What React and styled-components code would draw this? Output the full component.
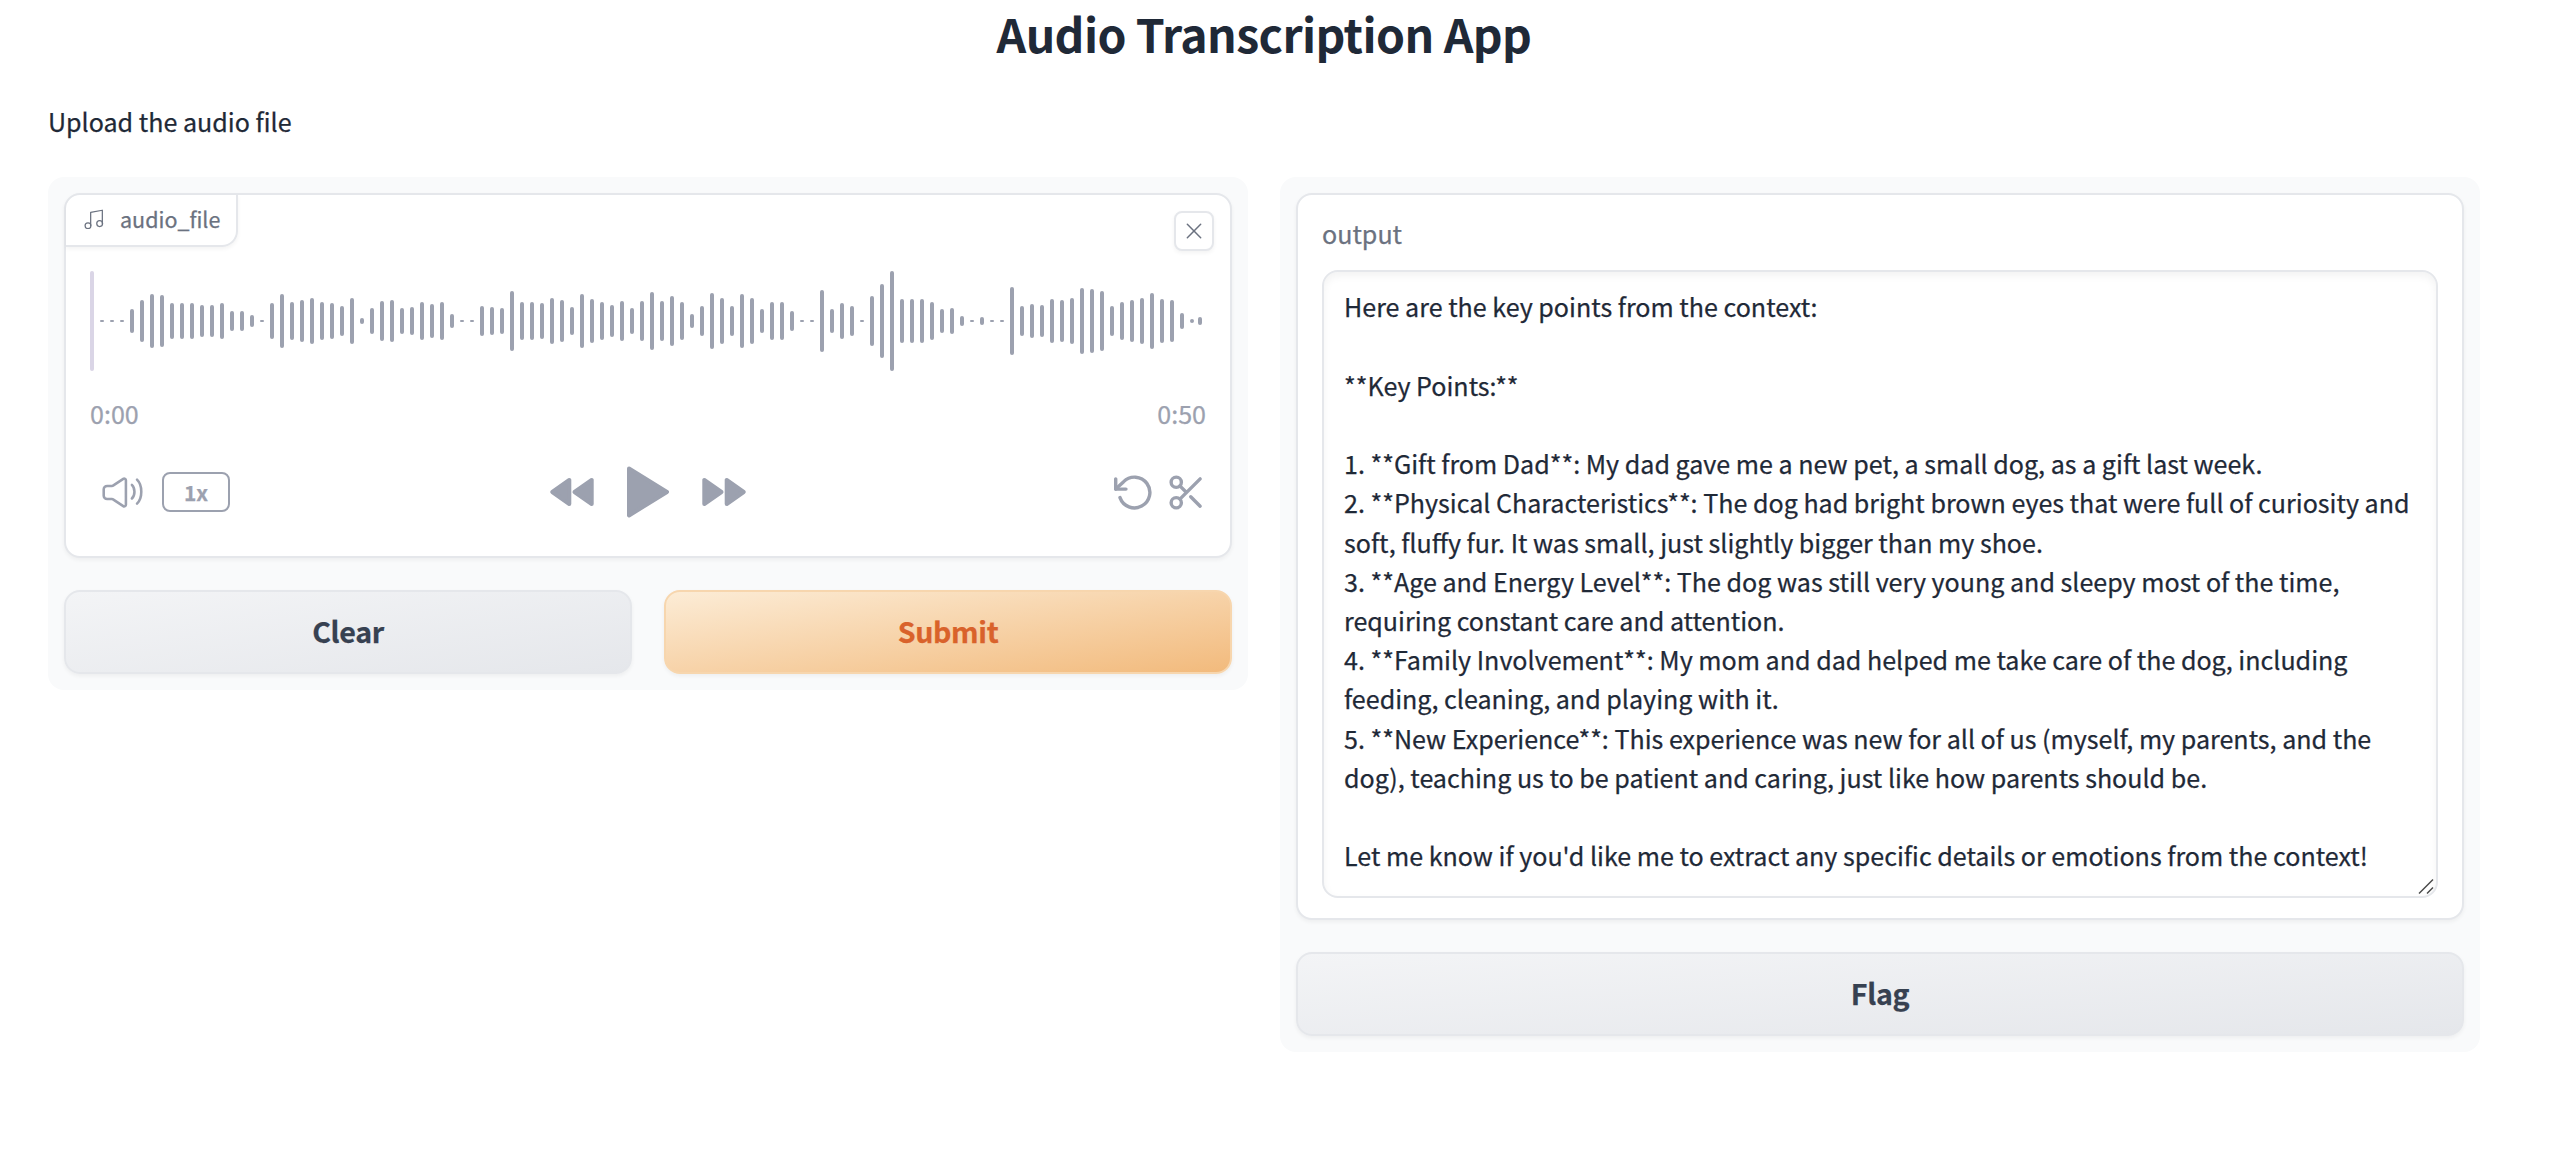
import React from "react";
import styled, { createGlobalStyle, css } from "styled-components";

const Global = createGlobalStyle`
  *, *::before, *::after { box-sizing: border-box; }
  body {
    margin: 0;
    background: #fff;
    color: #1f2937;
    font-family: "Noto Sans CJK SC", "Open Sans", sans-serif;
    font-size: 25.07px;
    line-height: 39.2px;
    -webkit-text-stroke: 0.25px currentColor;
  }
`;

const Page = styled.main`
  width: 2556px;
  height: 1166px;
  padding: 0 76px 0 48px;
`;

const Title = styled.h1`
  margin: 0;
  height: 102px;
  font-size: 46.4px;
  line-height: 65px;
  font-weight: 700;
  letter-spacing: -0.58px;
  text-align: center;
  -webkit-text-stroke: 0;
`;

const Intro = styled.p`
  margin: 0;
  height: 75px;
`;

const Columns = styled.div`
  display: grid;
  grid-template-columns: 1200px 1200px;
  gap: 32px;
  align-items: start;
`;

const Panel = styled.section`
  display: flex;
  flex-direction: column;
  gap: 32px;
  padding: 16px;
  border-radius: 16px;
  background: #f9fafb;
`;

const Card = styled.div`
  border: 2px solid #e5e7eb;
  border-radius: 16px;
  background: #fff;
  box-shadow: 0 2px 4px rgba(0, 0, 0, 0.05);
`;

const AudioCard = styled(Card)`
  height: 365px;
  display: flex;
  flex-direction: column;
`;

const CardTop = styled.div`
  display: flex;
  justify-content: space-between;
  align-items: flex-start;
  height: 76px;
  padding-right: 16px;
`;

const Label = styled.div`
  display: flex;
  align-items: center;
  gap: 16px;
  width: 172px;
  height: 52px;
  padding: 0 0 2px 18px;
  border: solid #e5e7eb;
  border-width: 0 2px 2px 0;
  border-radius: 14px 0 16px 0;
  box-shadow: 0 2px 4px rgba(0, 0, 0, 0.05);
  color: #6b7280;
  font-size: 21.5px;
  line-height: 32px;
`;

const CloseButton = styled.button`
  display: grid;
  place-items: center;
  width: 40px;
  height: 40px;
  margin-top: 16px;
  padding: 0;
  border: 2px solid #e5e7eb;
  border-radius: 8px;
  background: #fff;
  color: #6b7280;
  box-shadow: 0 2px 4px rgba(0, 0, 0, 0.05);
`;

const WaveSvg = styled.svg`
  display: block;
  margin-left: 24px;
`;

const Times = styled.div`
  display: flex;
  justify-content: space-between;
  margin-top: 22px;
  padding: 0 24px;
  color: #9ca1af;
  line-height: 40px;
`;

const Controls = styled.div`
  display: grid;
  grid-template-columns: 1fr auto 1fr;
  align-items: center;
  height: 56px;
  margin-top: 31px;
  padding: 0 23px;
  color: #9ca1af;
`;

const ControlGroup = styled.div`
  display: flex;
  align-items: center;
  gap: ${(p) => p.$gap}px;
  padding-left: ${(p) => p.$inset || 0}px;
  justify-content: ${(p) => p.$align || "flex-start"};
`;

const Speed = styled.button`
  width: 68px;
  height: 40px;
  padding: 0;
  border: 2px solid #9ca1af;
  border-radius: 8px;
  background: transparent;
  color: inherit;
  font: 700 21px/32px "Noto Sans CJK SC", sans-serif;
`;

const ButtonRow = styled.div`
  display: grid;
  grid-auto-flow: column;
  grid-auto-columns: 1fr;
  gap: 32px;
`;

const primary = css`
  border-color: #f7d6ae;
  background: linear-gradient(to bottom right, #fcecd6, #f2ba7c);
  color: #d9622b;
`;

const Button = styled.button`
  height: 84px;
  padding: 0 0 2px;
  border: 2px solid #e5e7eb;
  border-radius: 16px;
  background: linear-gradient(to bottom right, #f3f4f6, #e5e7eb);
  color: #374151;
  box-shadow: 0 2px 4px rgba(0, 0, 0, 0.05);
  font: 700 28.6px/44px "Noto Sans CJK SC", sans-serif;
  letter-spacing: -0.35px;
  ${(p) => p.$primary && primary}
`;

const OutputCard = styled(Card)`
  height: 727px;
  padding: 19px 24px 20px;
`;

const OutputLabel = styled.div`
  height: 56px;
  color: #6b7280;
`;

const OutputBox = styled.div`
  position: relative;
  height: 628px;
  padding: 15.4px 20px;
  border: 2px solid #e5e7eb;
  border-radius: 16px;
  box-shadow: inset 0 4px 8px rgba(0, 0, 0, 0.05);
  white-space: pre;
`;

const ResizeGrip = styled.svg`
  position: absolute;
  right: 0;
  bottom: 0;
`;

const bars = [
  2, 2, 2, 24, 42, 54, 52, 36, 36, 36, 32, 32, 36, 20, 20, 12, 2, 36, 54, 38,
  42, 46, 38, 36, 30, 46, 6, 26, 40, 42, 26, 28, 38, 34, 38, 14, 2, 2, 30, 28,
  26, 60, 38, 38, 36, 46, 42, 28, 54, 44, 38, 32, 40, 26, 40, 58, 40, 50, 38,
  14, 30, 56, 46, 30, 54, 46, 24, 38, 38, 20, 2, 2, 62, 24, 36, 30, 2, 50, 74,
  100, 44, 44, 44, 38, 24, 26, 10, 2, 8, 2, 2, 68, 30, 34, 32, 44, 42, 46, 66,
  64, 60, 30, 38, 42, 46, 56, 44, 42, 16, 4, 8,
];

function Waveform() {
  return (
    <WaveSvg width="1116" height="100" viewBox="0 0 1116 100">
      <rect width="4" height="100" rx="2" fill="#dad5e6" />
      {bars.map((h, i) => (
        <rect
          key={i}
          x={i === bars.length - 1 ? 1108 : (i + 1) * 10}
          y={50 - h / 2}
          width="4"
          height={h}
          rx={Math.min(2, h / 2)}
          fill="#9ca1af"
        />
      ))}
    </WaveSvg>
  );
}

function LineIcon({ size = 41, weight = 2, children }) {
  return (
    <svg
      width={size}
      height={size}
      viewBox="0 0 24 24"
      fill="none"
      stroke="currentColor"
      strokeWidth={weight}
      strokeLinecap="round"
      strokeLinejoin="round"
    >
      {children}
    </svg>
  );
}

function SkipIcon({ flip }) {
  return (
    <svg width="44" height="30" viewBox="0 0 44 30" fill="currentColor" stroke="currentColor" strokeWidth="4" strokeLinejoin="round">
      <g transform={flip ? "matrix(-1 0 0 1 44 0)" : undefined}>
        <path d="M2.3 15 19.3 3v24z" />
        <path d="M24.5 15 41.7 3v24z" />
      </g>
    </svg>
  );
}

const output = `Here are the key points from the context:

**Key Points:**

1. **Gift from Dad**: My dad gave me a new pet, a small dog, as a gift last week.
2. **Physical Characteristics**: The dog had bright brown eyes that were full of curiosity and
soft, fluffy fur. It was small, just slightly bigger than my shoe.
3. **Age and Energy Level**: The dog was still very young and sleepy most of the time,
requiring constant care and attention.
4. **Family Involvement**: My mom and dad helped me take care of the dog, including
feeding, cleaning, and playing with it.
5. **New Experience**: This experience was new for all of us (myself, my parents, and the
dog), teaching us to be patient and caring, just like how parents should be.

Let me know if you'd like me to extract any specific details or emotions from the context!`;

export default function App() {
  return (
    <Page>
      <Global />
      <Title>Audio Transcription App</Title>
      <Intro>Upload the audio file</Intro>
      <Columns>
        <Panel>
          <AudioCard>
            <CardTop>
              <Label>
                <LineIcon size={20} weight={1.5}>
                  <path d="M8 20V4l14-2.5v16" />
                  <circle cx="4.8" cy="20" r="3.5" />
                  <circle cx="18.8" cy="17.5" r="3.5" />
                </LineIcon>
                audio_file
              </Label>
              <CloseButton aria-label="Clear audio">
                <LineIcon size={20} weight={1.8}>
                  <path d="M4 4l16 16M20 4 4 20" />
                </LineIcon>
              </CloseButton>
            </CardTop>
            <Waveform />
            <Times>
              <span>0:00</span>
              <span>0:50</span>
            </Times>
            <Controls>
              <ControlGroup $gap={19} $inset={13}>
                <LineIcon weight={1.5}>
                  <path d="M1 13.857v-3.714a2 2 0 0 1 2-2h2.9a1 1 0 0 0 .55-.165l6-3.956a1 1 0 0 1 1.55.835v14.286a1 1 0 0 1-1.55.835l-6-3.956a1 1 0 0 0-.55-.165H3a2 2 0 0 1-2-2z" />
                  <path d="M17.5 7.5S19 9 19 11.5s-1.5 4-1.5 4" />
                  <path d="M20.5 4.5S23 7 23 11.5s-2.5 7-2.5 7" />
                </LineIcon>
                <Speed>1x</Speed>
              </ControlGroup>
              <ControlGroup $gap={33}>
                <SkipIcon />
                <svg width="42" height="52" viewBox="0 0 42 52" fill="currentColor" stroke="currentColor" strokeWidth="4" strokeLinejoin="round">
                  <path d="M2 2.5 40 26 2 49.5z" />
                </svg>
                <SkipIcon flip />
              </ControlGroup>
              <ControlGroup $gap={11} $align="flex-end">
                <LineIcon>
                  <path d="M1 4v6h6" />
                  <path d="M3.51 15a9 9 0 1 0 2.13-9.36L1 10" />
                </LineIcon>
                <LineIcon>
                  <circle cx="6" cy="6" r="3" />
                  <circle cx="6" cy="18" r="3" />
                  <path d="M20 4 8.12 15.88M14.47 14.48 20 20M8.12 8.12 12 12" />
                </LineIcon>
              </ControlGroup>
            </Controls>
          </AudioCard>
          <ButtonRow>
            <Button>Clear</Button>
            <Button $primary>Submit</Button>
          </ButtonRow>
        </Panel>
        <Panel>
          <OutputCard>
            <OutputLabel>output</OutputLabel>
            <OutputBox>
              {output}
              <ResizeGrip width="18" height="18" viewBox="0 0 18 18" stroke="#4b4b4b" strokeWidth="1.5">
                <path d="M1 15.5 15 1.5M9 15.5l6-6" />
              </ResizeGrip>
            </OutputBox>
          </OutputCard>
          <ButtonRow>
            <Button>Flag</Button>
          </ButtonRow>
        </Panel>
      </Columns>
    </Page>
  );
}
